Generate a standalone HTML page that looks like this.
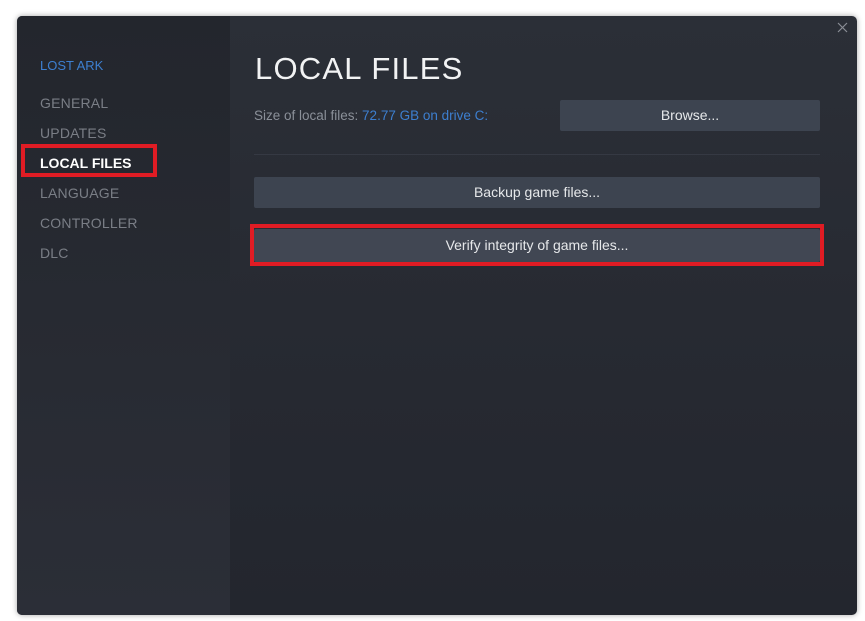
<!DOCTYPE html>
<html><head><style>
body{margin:0;width:865px;height:621px;background:#fff;position:relative;overflow:hidden;font-family:"Liberation Sans",sans-serif}
.win{position:absolute;left:17px;top:16px;width:840px;height:599px;border-radius:5px;overflow:hidden;box-shadow:0 0 6px rgba(0,0,0,.35);background:linear-gradient(180deg,#2b2f37 0%,#272a32 50%,#23262e 100%)}
.side{position:absolute;left:0;top:0;width:213px;height:100%;background:linear-gradient(180deg,#23262d 0%,#282b33 60%,#2b2e37 100%)}
.nav{position:absolute;left:23px;font-size:14px;color:#7a7e86;letter-spacing:.2px}
.t{position:absolute;color:#fff}
.btn{position:absolute;background:#3d4450;color:#e6e8ea;font-size:14px;text-align:center;border-radius:2px}
.red{position:absolute;border:4px solid #e01c24;box-sizing:border-box}
</style></head><body>
<div class="win">
<div class="side"></div>
<div class="nav" style="top:42px;color:#3d7fd0;font-size:13px;letter-spacing:0">LOST ARK</div>
<div class="nav" style="top:79px">GENERAL</div>
<div class="nav" style="top:109px">UPDATES</div>
<div class="nav" style="top:139px;color:#fff;font-weight:bold;letter-spacing:0">LOCAL FILES</div>
<div class="nav" style="top:169px">LANGUAGE</div>
<div class="nav" style="top:199px">CONTROLLER</div>
<div class="nav" style="top:229px">DLC</div>
<svg style="position:absolute;left:820px;top:6px" width="11" height="11"><path d="M1 1L10 10M10 1L1 10" stroke="#8a8e96" stroke-width="1.2"/></svg>
<div class="t" style="left:238px;top:35px;font-size:31px;letter-spacing:1.2px;color:#f2f3f4">LOCAL FILES</div>
<div class="t" style="left:237px;top:92px;font-size:13.5px;color:#8b9099">Size of local files: <span style="color:#3d7fd0">72.77 GB on drive C:</span></div>
<div class="btn" style="left:543px;top:84px;width:260px;height:31px;line-height:31px">Browse...</div>
<div style="position:absolute;left:237px;top:138px;width:566px;height:1px;background:#353943"></div>
<div class="btn" style="left:237px;top:161px;width:566px;height:31px;line-height:31px">Backup game files...</div>
<div class="btn" style="left:237px;top:213px;width:566px;height:33px;line-height:33px;background:#414753">Verify integrity of game files...</div>
</div>
<div class="red" style="left:21px;top:144px;width:136px;height:33px"></div>
<div class="red" style="left:250px;top:224px;width:574px;height:42px"></div>
</body></html>
